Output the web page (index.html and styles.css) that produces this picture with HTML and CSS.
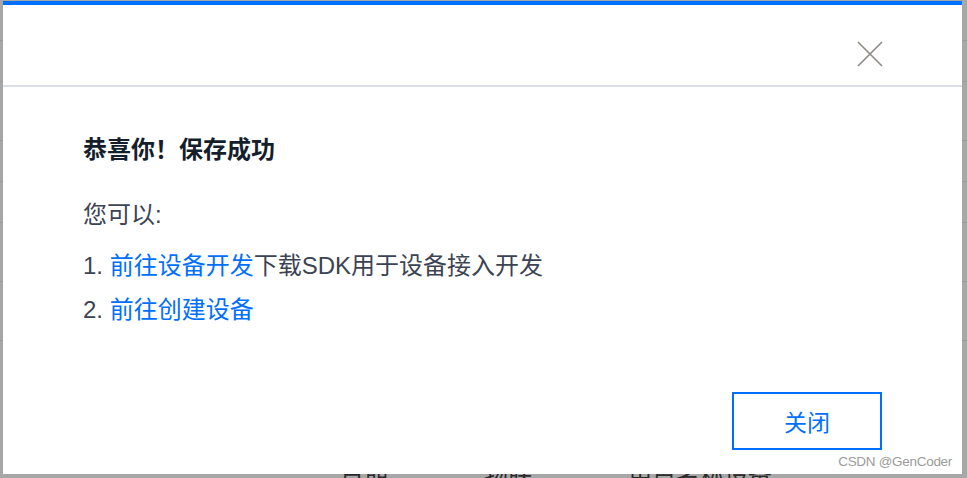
FILE: index.html
```html
<!DOCTYPE html>
<html lang="zh-CN">
<head>
  <meta charset="UTF-8" />
  <meta name="viewport" content="width=device-width, initial-scale=1.0" />
  <title>保存成功</title>
  <link rel="stylesheet" href="styles.css">
</head>
<body>
  <div class="page">
    <div class="page-row"></div>
    <div class="page-row"></div>
    <div class="page-row tall"></div>
    <div class="page-row"></div>
    <div class="page-row"></div>
    <div class="page-row tall"></div>
    <div class="page-row tall"></div>
    <div class="page-text">日期　　　　物联　　　　用户名称设备</div>
  </div>

  <div class="modal">
    <div class="modal-bar"></div>
    <div class="modal-head">
      <button class="modal-close" aria-label="关闭">
        <svg width="26" height="26" viewBox="0 0 26 26">
          <path d="M1 1 L25 25 M25 1 L1 25" stroke="#8c8882" stroke-width="1.6" fill="none" />
        </svg>
      </button>
    </div>
    <div class="modal-body">
      <h3 class="modal-title">恭喜你！保存成功</h3>
      <p class="modal-lead">您可以:</p>
      <ol class="modal-list">
        <li>1. <a href="#">前往设备开发</a>下载SDK用于设备接入开发</li>
        <li>2. <a href="#">前往创建设备</a></li>
      </ol>
    </div>
    <div class="modal-foot">
      <button class="btn-outline">关闭</button>
    </div>
  </div>

  <div class="watermark">CSDN @GenCoder</div>
</body>
</html>
```

FILE: styles.css
```css
body {
  margin: 0;
  height: 478px;
  overflow: hidden;
  background: #a7a7a7;
  font-family: "Liberation Sans", "Noto Sans CJK SC", sans-serif;
  color: #3c4353;
}

.page-row {
  height: 40px;
  border-bottom: 1px solid #9b9b9b;
}
.page-row.tall {
  height: 58px;
}
.page-text {
  position: absolute;
  left: 340px;
  top: 464px;
  font-size: 24px;
  line-height: 24px;
  color: #2b2b2b;
  white-space: nowrap;
}

.modal {
  position: absolute;
  left: 3px;
  top: 1px;
  width: 959px;
  height: 473px;
  background: #fff;
  display: flex;
  flex-direction: column;
}
.modal-bar {
  height: 4px;
  background: #006eff;
}
.modal-head {
  height: 82px;
  display: flex;
  justify-content: flex-end;
  align-items: flex-end;
  padding: 0 79px 18px 0;
  box-sizing: border-box;
  border-bottom: 2px solid #dadfe8;
}
.modal-close {
  border: 0;
  background: none;
  padding: 0;
  width: 26px;
  height: 26px;
  cursor: pointer;
}
.modal-close svg {
  display: block;
}

.modal-body {
  flex: 1;
  padding: 0 80px;
}
.modal-title {
  margin: 51px 0 0;
  font-size: 24px;
  line-height: 24px;
  font-weight: bold;
  color: #151e2b;
}
.modal-lead {
  margin: 41px 0 0;
  font-size: 24px;
  line-height: 24px;
}
.modal-list {
  list-style: none;
  margin: 17px 0 0;
  padding: 0;
  font-size: 24px;
  line-height: 44px;
}
.modal-list a {
  color: #006eff;
  text-decoration: none;
}

.modal-foot {
  display: flex;
  justify-content: flex-end;
  padding: 0 80px 24px 0;
}
.btn-outline {
  width: 150px;
  height: 58px;
  border: 2px solid #006eff;
  background: #fff;
  color: #006eff;
  font-family: "Liberation Sans", "Noto Sans CJK SC", sans-serif;
  font-size: 23px;
  cursor: pointer;
}

.watermark {
  position: absolute;
  right: 15px;
  top: 454px;
  font-size: 13.5px;
  letter-spacing: -0.3px;
  color: #9b9b9b;
}
```
